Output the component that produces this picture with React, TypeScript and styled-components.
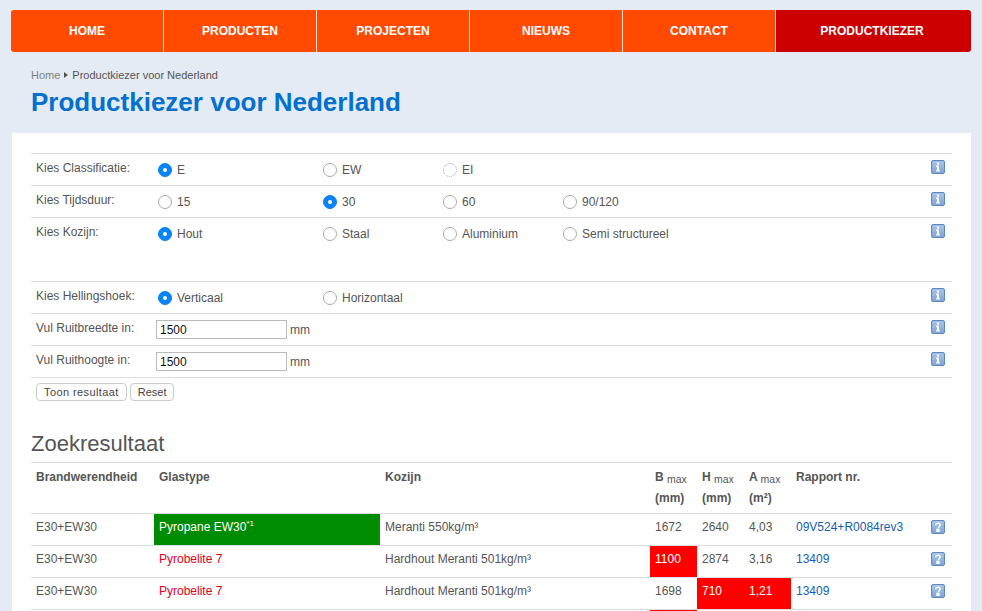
import styled, { createGlobalStyle } from "styled-components";

const GlobalStyle = createGlobalStyle`
	html, body {
		margin: 0;
		height: 611px;
		overflow: hidden;
		background-color: #e4ebf4;
		font-family: "Liberation Sans", Arial, sans-serif;
		font-size: 12px;
		color: #555;
	}
`

const Page = styled.div`
	padding: 10px 11px 0;
`

const Nav = styled.nav`
	display: flex;
	height: 42px;
	border-radius: 3px;
	overflow: hidden;
`

const NavItem = styled.a<{ $active?: boolean }>`
	display: flex;
	align-items: center;
	justify-content: center;
	flex: ${({ $active }) => ($active ? "1" : "0 0 153px")};
	padding: ${({ $active }) => ($active ? "0 3px 1px 0" : "0 0 1px")};
	box-sizing: border-box;
	border-right: ${({ $active }) => ($active ? "none" : "1px solid #fbe3d6")};
	background-color: ${({ $active }) => ($active ? "#cc0000" : "#ff4a00")};
	color: #fff;
	font-size: 12px;
	font-weight: bold;
	text-transform: uppercase;
`

const Breadcrumb = styled.div`
	display: flex;
	align-items: center;
	gap: 4px;
	margin: 16px 0 0 20px;
	height: 13px;
	font-size: 11px;
	color: #555;
`

const BreadcrumbHome = styled.span`
	color: #808080;
`

const BreadcrumbArrow = styled.span`
	border-left: 4px solid #555;
	border-top: 3px solid transparent;
	border-bottom: 3px solid transparent;
`

const Title = styled.h1`
	margin: 5px 0 15px 20px;
	height: 32px;
	font-size: 26px;
	line-height: 32px;
	font-weight: bold;
	color: #0270cd;
`

const Card = styled.main`
	margin-left: 1px;
	height: 478px;
	padding: 20px 19px 0;
	box-sizing: border-box;
	background-color: #fff;
	overflow: hidden;
`

const FormRow = styled.div`
	display: grid;
	grid-template-columns: 127px 165px 120px 120px 1fr 21px;
	align-items: center;
	height: 32px;
	box-sizing: border-box;
	border-top: 1px solid #ddd;
`

const RowEnd = styled.div`
	grid-column: 6;
	display: flex;
	padding-bottom: 6px;
`

const Label = styled.span`
	padding: 0 0 3px 5px;
`

const RadioLabel = styled.label`
	display: flex;
	align-items: center;
	gap: 5px;
`

const Radio = styled.span<{ $checked?: boolean; $faint?: boolean }>`
	display: flex;
	align-items: center;
	justify-content: center;
	width: 14px;
	height: 14px;
	box-sizing: border-box;
	border-radius: 50%;
	border: 1px ${({ $faint }) => ($faint ? "dotted #aaa" : "solid #aaa")};
	${({ $checked }) => $checked && "background-color: #0a84f4; border-color: #0a84f4;"}

	&::after {
		content: "";
		display: ${({ $checked }) => ($checked ? "block" : "none")};
		width: 4px;
		height: 4px;
		border-radius: 50%;
		background-color: #fff;
	}
`

const FormSpacer = styled.div`
	height: 32px;
`

const InputCell = styled.div`
	grid-column: 2 / 4;
	display: flex;
	align-items: center;
	gap: 3px;
	margin-left: -2px;
`

const TextInput = styled.input`
	width: 131px;
	height: 19px;
	padding: 0 3px;
	box-sizing: border-box;
	border: 1px solid #bbb;
	background-color: #fff;
	font-family: inherit;
	font-size: 12px;
	color: #111;
	outline: none;
`

const ButtonRow = styled.div`
	display: flex;
	gap: 3px;
	padding: 5px 0 0 5px;
	border-top: 1px solid #ddd;
`

const Button = styled.button`
	height: 18px;
	padding: 0 7px;
	border: 1px solid #ccc;
	border-radius: 4px;
	background-color: #fff;
	font-family: inherit;
	font-size: 11px;
	letter-spacing: 0.4px;
	color: #444;
`

const ResetButton = styled(Button)`
	letter-spacing: 0;
`

const SectionTitle = styled.h2`
	margin: 0;
	padding-top: 30px;
	height: 61px;
	box-sizing: border-box;
	font-size: 22px;
	line-height: 26px;
	font-weight: normal;
	color: #555;
`

const Table = styled.table`
	width: 921px;
	table-layout: fixed;
	border-collapse: separate;
	border-spacing: 0;
`

const HeadCell = styled.th`
	height: 51px;
	padding: 4px 5px 0;
	box-sizing: border-box;
	border-top: 1px solid #ddd;
	text-align: left;
	vertical-align: top;
	font-size: 12px;
	line-height: 21px;
	font-weight: bold;
`

const Max = styled.span`
	font-size: 10.5px;
	font-weight: normal;
	position: relative;
	top: 2px;
`

const Cell = styled.td<{ $bg?: string; $color?: string }>`
	height: 32px;
	padding: 6px 5px 0;
	box-sizing: border-box;
	border-top: 1px solid #ddd;
	vertical-align: top;
	line-height: 15px;
	white-space: nowrap;
	background-color: ${({ $bg }) => $bg || "transparent"};
	color: ${({ $bg, $color }) => ($bg ? "#fff" : $color || "#555")};
`

const IconCell = styled(Cell)`
	padding: 6px 0 0 5px;
`

const ReportLink = styled.a`
	color: #1560ae;
`

const Sup = styled.sup`
	font-size: 8px;
	line-height: 0;
`

function HelpIcon({ kind }: { kind: "info" | "question" })
{
	return (
		<svg width="14" height="14" viewBox="0 0 14 14" style={{ display: "block" }}>
			<defs>
				<linearGradient id={`grad-${kind}`} x1="0" y1="0" x2="0" y2="1">
					<stop offset="0" stopColor="#a9c6ea" />
					<stop offset="1" stopColor="#7fa5d6" />
				</linearGradient>
			</defs>
			<rect x="0.5" y="0.5" width="13" height="13" rx="1.5" fill={`url(#grad-${kind})`} stroke="#5f88b8" />
			{kind === "info" ? (
				<path d="M6 2.6h2v1.8H6zM5 5.6h3v4.6h1v1.4H5v-1.4h1V7H5z" fill="#fff" />
			) : (
				<path d="M4.8 5.2c0-1.3 1-1.9 2.2-1.9s2.2.7 2.2 1.9c0 1.5-2 1.6-2 3M6 9.5h2v1.7H6z" fill="none" stroke="#fff" strokeWidth="1.4" />
			)}
		</svg>
	)
}

interface OptionProps { text: string; checked?: boolean; faint?: boolean }

function Option({ text, checked, faint }: OptionProps)
{
	return (
		<RadioLabel>
			<Radio $checked={checked} $faint={faint} />
			{text}
		</RadioLabel>
	)
}

function RadioRow({ label, options }: { label: string; options: OptionProps[] })
{
	return (
		<FormRow>
			<Label>{label}</Label>
			{options.map((o) => <Option key={o.text} {...o} />)}
			<RowEnd><HelpIcon kind="info" /></RowEnd>
		</FormRow>
	)
}

function InputRow({ label }: { label: string })
{
	return (
		<FormRow>
			<Label>{label}</Label>
			<InputCell>
				<TextInput defaultValue="1500" />
				mm
			</InputCell>
			<RowEnd><HelpIcon kind="info" /></RowEnd>
		</FormRow>
	)
}

const columnWidths = [123, 226, 270, 47, 47, 47, 135, 26]

export default function App()
{
	return (
		<Page>
			<GlobalStyle />
			<Nav>
				<NavItem>Home</NavItem>
				<NavItem>Producten</NavItem>
				<NavItem>Projecten</NavItem>
				<NavItem>Nieuws</NavItem>
				<NavItem>Contact</NavItem>
				<NavItem $active>Productkiezer</NavItem>
			</Nav>
			<Breadcrumb>
				<BreadcrumbHome>Home</BreadcrumbHome>
				<BreadcrumbArrow />
				Productkiezer voor Nederland
			</Breadcrumb>
			<Title>Productkiezer voor Nederland</Title>
			<Card>
				<RadioRow label="Kies Classificatie:" options={[{ text: "E", checked: true }, { text: "EW" }, { text: "EI", faint: true }]} />
				<RadioRow label="Kies Tijdsduur:" options={[{ text: "15" }, { text: "30", checked: true }, { text: "60" }, { text: "90/120" }]} />
				<RadioRow label="Kies Kozijn:" options={[{ text: "Hout", checked: true }, { text: "Staal" }, { text: "Aluminium" }, { text: "Semi structureel" }]} />
				<FormSpacer />
				<RadioRow label="Kies Hellingshoek:" options={[{ text: "Verticaal", checked: true }, { text: "Horizontaal" }]} />
				<InputRow label="Vul Ruitbreedte in:" />
				<InputRow label="Vul Ruithoogte in:" />
				<ButtonRow>
					<Button>Toon resultaat</Button>
					<ResetButton>Reset</ResetButton>
				</ButtonRow>
				<SectionTitle>Zoekresultaat</SectionTitle>
				<Table>
					<colgroup>
						{columnWidths.map((w, i) => <col key={i} width={w} />)}
					</colgroup>
					<thead>
						<tr>
							<HeadCell>Brandwerendheid</HeadCell>
							<HeadCell>Glastype</HeadCell>
							<HeadCell>Kozijn</HeadCell>
							<HeadCell>B <Max>max</Max><br />(mm)</HeadCell>
							<HeadCell>H <Max>max</Max><br />(mm)</HeadCell>
							<HeadCell>A <Max>max</Max><br />(m²)</HeadCell>
							<HeadCell>Rapport nr.</HeadCell>
							<HeadCell />
						</tr>
					</thead>
					<tbody>
						<tr>
							<Cell>E30+EW30</Cell>
							<Cell $bg="#008c00">Pyropane EW30<Sup>*1</Sup></Cell>
							<Cell>Meranti 550kg/m³</Cell>
							<Cell>1672</Cell>
							<Cell>2640</Cell>
							<Cell>4,03</Cell>
							<Cell><ReportLink>09V524+R0084rev3</ReportLink></Cell>
							<IconCell><HelpIcon kind="question" /></IconCell>
						</tr>
						<tr>
							<Cell>E30+EW30</Cell>
							<Cell $color="#e0001b">Pyrobelite 7</Cell>
							<Cell>Hardhout Meranti 501kg/m³</Cell>
							<Cell $bg="#ff0000">1100</Cell>
							<Cell>2874</Cell>
							<Cell>3,16</Cell>
							<Cell><ReportLink>13409</ReportLink></Cell>
							<IconCell><HelpIcon kind="question" /></IconCell>
						</tr>
						<tr>
							<Cell>E30+EW30</Cell>
							<Cell $color="#e0001b">Pyrobelite 7</Cell>
							<Cell>Hardhout Meranti 501kg/m³</Cell>
							<Cell>1698</Cell>
							<Cell $bg="#ff0000">710</Cell>
							<Cell $bg="#ff0000">1,21</Cell>
							<Cell><ReportLink>13409</ReportLink></Cell>
							<IconCell><HelpIcon kind="question" /></IconCell>
						</tr>
						<tr>
							<Cell />
							<Cell />
							<Cell />
							<Cell $bg="#ff0000" />
							<Cell />
							<Cell />
							<Cell />
							<Cell />
						</tr>
					</tbody>
				</Table>
			</Card>
		</Page>
	)
}
